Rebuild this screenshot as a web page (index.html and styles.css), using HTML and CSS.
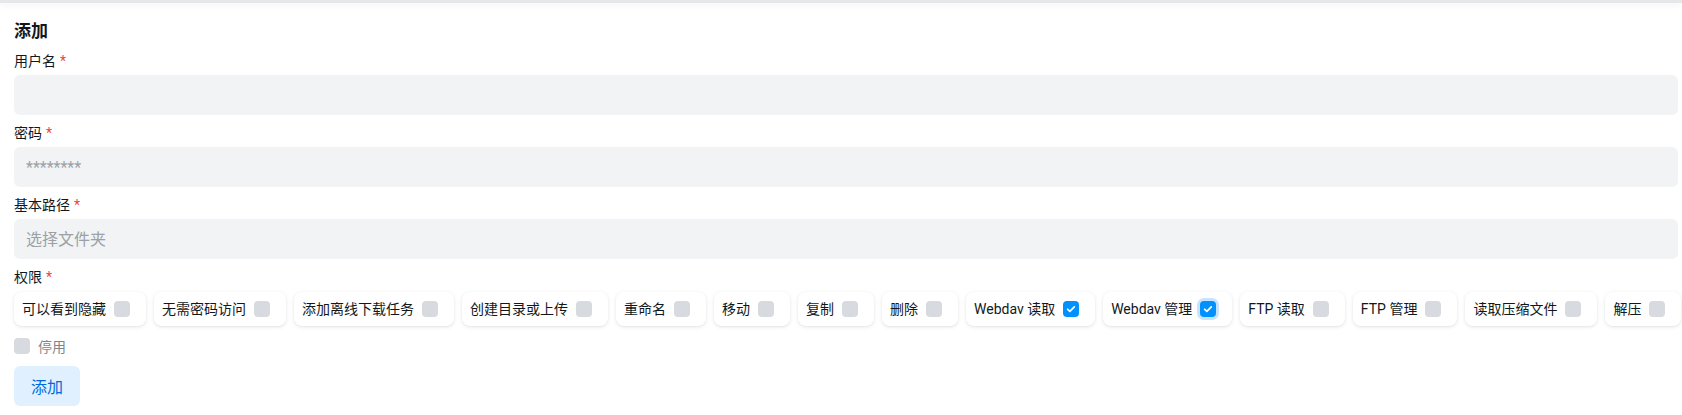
FILE: index.html
```html
<!DOCTYPE html>
<html lang="zh-CN">
<head>
<meta charset="utf-8">
<title>添加</title>
<link rel="stylesheet" href="styles.css">
</head>
<body>
<div class="topbar"></div>
<main class="page">
  <h2 class="title">添加</h2>
  <div class="field">
    <label class="label">用户名<span class="req">*</span></label>
    <input class="input" type="text">
  </div>
  <div class="field">
    <label class="label">密码<span class="req">*</span></label>
    <input class="input" type="password" placeholder="********">
  </div>
  <div class="field">
    <label class="label">基本路径<span class="req">*</span></label>
    <input class="input input-path" type="text" placeholder="选择文件夹">
  </div>
  <div class="field field-perms">
    <label class="label">权限<span class="req">*</span></label>
    <div class="perms">
      <div class="perm"><span>可以看到隐藏</span><span class="cb"></span></div>
      <div class="perm"><span>无需密码访问</span><span class="cb"></span></div>
      <div class="perm"><span>添加离线下载任务</span><span class="cb"></span></div>
      <div class="perm"><span>创建目录或上传</span><span class="cb"></span></div>
      <div class="perm"><span>重命名</span><span class="cb"></span></div>
      <div class="perm"><span>移动</span><span class="cb"></span></div>
      <div class="perm"><span>复制</span><span class="cb"></span></div>
      <div class="perm"><span>删除</span><span class="cb"></span></div>
      <div class="perm"><span>Webdav 读取</span><span class="cb checked"><svg viewBox="0 0 16 16"><path d="M4.2 8.3l2.5 2.4 5-5.2" /></svg></span></div>
      <div class="perm"><span>Webdav 管理</span><span class="cb checked focus"><svg viewBox="0 0 16 16"><path d="M4.2 8.3l2.5 2.4 5-5.2" /></svg></span></div>
      <div class="perm"><span>FTP 读取</span><span class="cb"></span></div>
      <div class="perm"><span>FTP 管理</span><span class="cb"></span></div>
      <div class="perm"><span>读取压缩文件</span><span class="cb"></span></div>
      <div class="perm"><span>解压</span><span class="cb"></span></div>
    </div>
  </div>
  <div class="disable-row"><span class="cb"></span><span class="disable-text">停用</span></div>
  <div><button class="btn" type="button">添加</button></div>
</main>
</body>
</html>
```

FILE: styles.css
```css
* { box-sizing: border-box; }
html, body { margin: 0; padding: 0; background: #ffffff; }
body {
  font-family: Roboto, "Noto Sans CJK SC", "Noto Sans", sans-serif;
  color: #11181c;
  font-size: 14px;
}
.topbar {
  height: 3px;
  background: #e6e7e9;
  box-shadow: 0 2px 6px rgba(0, 0, 0, 0.07);
}
.page {
  display: flex;
  flex-direction: column;
  gap: 8px;
  padding: 16px 4px 0 14px;
}
.title {
  margin: 0;
  font-size: 17px;
  line-height: 24px;
  font-weight: 700;
}
.field {
  display: flex;
  flex-direction: column;
  gap: 4px;
}
.field-perms { gap: 5px; }
.label {
  font-size: 14px;
  line-height: 20px;
  font-weight: 400;
}
.req {
  color: #e5484d;
  margin-left: 4px;
}
.input {
  height: 40px;
  width: 100%;
  border: none;
  outline: none;
  border-radius: 6px;
  background: #f1f3f5;
  padding: 0 12px;
  font-family: inherit;
  font-size: 16px;
  color: #11181c;
}
.input::placeholder { color: #9ba1a6; }
.perms {
  display: flex;
  flex-wrap: nowrap;
  gap: 8px;
}
.perm {
  display: flex;
  align-items: center;
  flex: none;
  gap: 8px;
  height: 34px;
  padding: 0 16px 0 8px;
  background: #ffffff;
  border-radius: 8px;
  box-shadow: 0 1px 4px rgba(0, 0, 0, 0.09), 0 1px 2px rgba(0, 0, 0, 0.04);
  font-size: 14px;
  line-height: 20px;
  white-space: nowrap;
}
.cb {
  width: 16px;
  height: 16px;
  flex: none;
  border-radius: 4px;
  background: #d7dbdf;
  display: inline-flex;
  align-items: center;
  justify-content: center;
}
.cb.checked { background: #0091ff; }
.cb.focus { box-shadow: 0 0 0 3px #c7e3fd; }
.cb svg {
  width: 14px;
  height: 14px;
  fill: none;
  stroke: #ffffff;
  stroke-width: 2;
  stroke-linecap: round;
  stroke-linejoin: round;
}
.disable-row {
  display: flex;
  align-items: center;
  gap: 8px;
  height: 24px;
}
.disable-text {
  color: #7e868c;
  font-size: 14px;
}
.btn {
  height: 40px;
  padding: 0 17px;
  border: none;
  border-radius: 6px;
  background: #e1f0ff;
  color: #006adc;
  font-family: inherit;
  font-size: 16px;
}
```
